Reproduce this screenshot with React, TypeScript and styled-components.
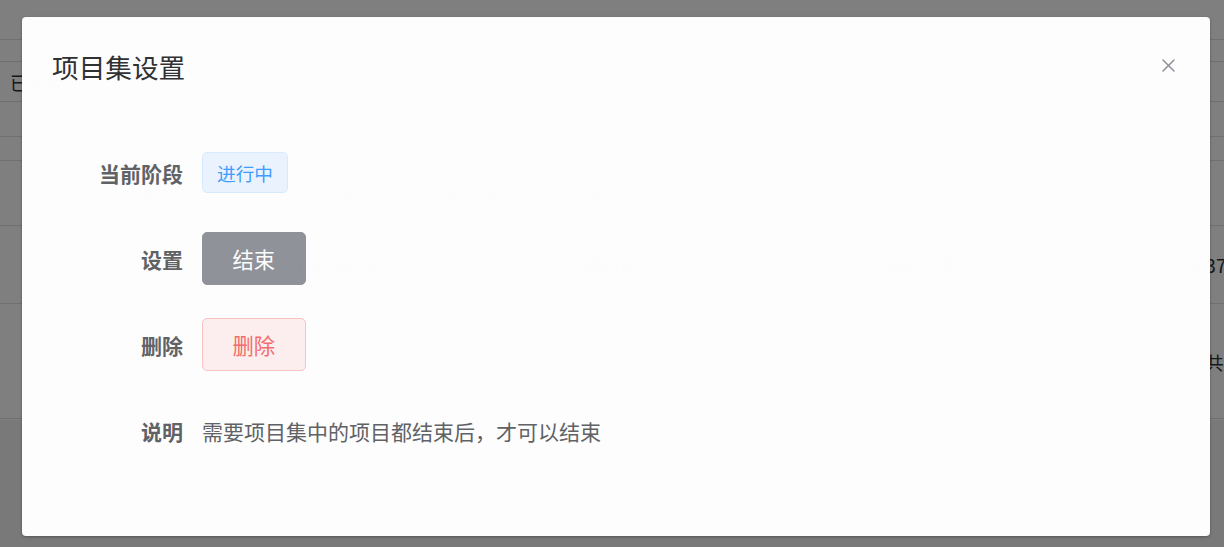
import React from "react";
import styled, { createGlobalStyle } from "styled-components";

const GlobalStyle = createGlobalStyle`
  html, body {
    margin: 0;
    padding: 0;
  }
  body {
    font-family: "Noto Sans CJK SC", "Noto Sans", "Liberation Sans", sans-serif;
    background: #f2f2f2;
  }
  * {
    box-sizing: border-box;
  }
`;

export const Page = styled.div`
  position: relative;
  width: 1224px;
  height: 547px;
  overflow: hidden;
  background: #f2f2f2;
`;

export const Table = styled.div`
  display: flex;
  flex-direction: column;
  background: #ffffff;
  height: 420px;
`;

export const TableRow = styled.div<{ h: number }>`
  display: flex;
  align-items: center;
  height: ${(p) => p.h}px;
  border-bottom: 1px solid #dcdfe6;
  font-size: 18.67px;
  color: #606266;
  white-space: nowrap;
`;

export const Cell = styled.div<{ w: number; muted?: boolean }>`
  flex: 0 0 ${(p) => p.w}px;
  color: ${(p) => (p.muted ? "#909399" : "#303133")};
  overflow: hidden;
`;

export const Overlay = styled.div`
  position: absolute;
  inset: 0;
  display: flex;
  align-items: stretch;
  padding: 17px 14px 11px 22px;
  background: rgba(0, 0, 0, 0.5);
`;

export const Dialog = styled.div`
  position: relative;
  flex: 1;
  background: #ffffff;
  border-radius: 4px;
  box-shadow: 0 1px 3px rgba(0, 0, 0, 0.3);
  opacity: 0.988;
`;

export const Header = styled.div`
  padding: 34px 30px 0;
  line-height: 32px;
`;

export const Title = styled.span`
  font-size: 26.67px;
  color: #303133;
`;

export const CloseButton = styled.button`
  position: absolute;
  top: 42px;
  right: 35px;
  width: 13px;
  height: 13px;
  padding: 0;
  border: none;
  background: none;
  cursor: pointer;
  display: flex;
`;

export const Body = styled.div`
  padding: 59px 20px 0;
  display: flex;
  flex-direction: column;
  gap: 33px;
`;

export const FormItem = styled.div`
  display: flex;
  align-items: center;
  height: 53px;
`;

export const Label = styled.label`
  flex: 0 0 160px;
  padding-right: 19px;
  text-align: right;
  font-size: 21px;
  font-weight: 700;
  color: #606266;
`;

export const Tag = styled.span`
  display: inline-flex;
  align-items: center;
  height: 41px;
  padding: 0 14px;
  font-size: 18.67px;
  color: #409eff;
  background: #ecf5ff;
  border: 1px solid #d9ecff;
  border-radius: 5px;
`;

export const Button = styled.button<{ kind: "info" | "danger" }>`
  height: 53px;
  padding: 0 29.5px;
  font-family: inherit;
  font-size: 21.33px;
  border-radius: 5px;
  cursor: pointer;
  border: 1px solid ${(p) => (p.kind === "info" ? "#909399" : "#fbc4c4")};
  background: ${(p) => (p.kind === "info" ? "#909399" : "#fef0f0")};
  color: ${(p) => (p.kind === "info" ? "#ffffff" : "#f56c6c")};
`;

export const Note = styled.span`
  font-size: 21px;
  color: #606266;
`;

const rows: { h: number; cells: { w: number; t: string; muted?: boolean }[] }[] = [
  { h: 40, cells: [] },
  { h: 22, cells: [] },
  { h: 40, cells: [{ w: 10, t: "" }, { w: 200, t: "已结束" }] },
  { h: 35, cells: [] },
  { h: 24, cells: [] },
  {
    h: 65,
    cells: [
      { w: 123, t: "" },
      { w: 158, t: "负责人", muted: true },
      { w: 145, t: "开始时间", muted: true },
      { w: 157, t: "结束时间", muted: true },
      { w: 305, t: "状态", muted: true },
      { w: 300, t: "统计人天", muted: true },
    ],
  },
  {
    h: 78,
    cells: [
      { w: 281, t: "" },
      { w: 302, t: "2024-06-22" },
      { w: 305, t: "进行中" },
      { w: 302, t: "800人天" },
      { w: 60, t: "4.37" },
    ],
  },
  { h: 115, cells: [{ w: 1205, t: "" }, { w: 60, t: "共 3 条" }] },
];

const CloseIcon = () => (
  <svg width="13" height="13" viewBox="0 0 13 13" fill="none">
    <path d="M1 1L12 12M12 1L1 12" stroke="#909399" strokeWidth="1.6" strokeLinecap="round" />
  </svg>
);

const App = () => {
  return (
    <Page>
      <GlobalStyle />
      <Table>
        {rows.map((r, i) => (
          <TableRow key={i} h={r.h}>
            {r.cells.map((c, j) => (
              <Cell key={j} w={c.w} muted={c.muted}>
                {c.t}
              </Cell>
            ))}
          </TableRow>
        ))}
      </Table>
      <Overlay>
        <Dialog>
          <Header>
            <Title>项目集设置</Title>
          </Header>
          <CloseButton aria-label="关闭">
            <CloseIcon />
          </CloseButton>
          <Body>
            <FormItem>
              <Label>当前阶段</Label>
              <Tag>进行中</Tag>
            </FormItem>
            <FormItem>
              <Label>设置</Label>
              <Button kind="info">结束</Button>
            </FormItem>
            <FormItem>
              <Label>删除</Label>
              <Button kind="danger">删除</Button>
            </FormItem>
            <FormItem>
              <Label>说明</Label>
              <Note>需要项目集中的项目都结束后，才可以结束</Note>
            </FormItem>
          </Body>
        </Dialog>
      </Overlay>
    </Page>
  );
};

export default App;
